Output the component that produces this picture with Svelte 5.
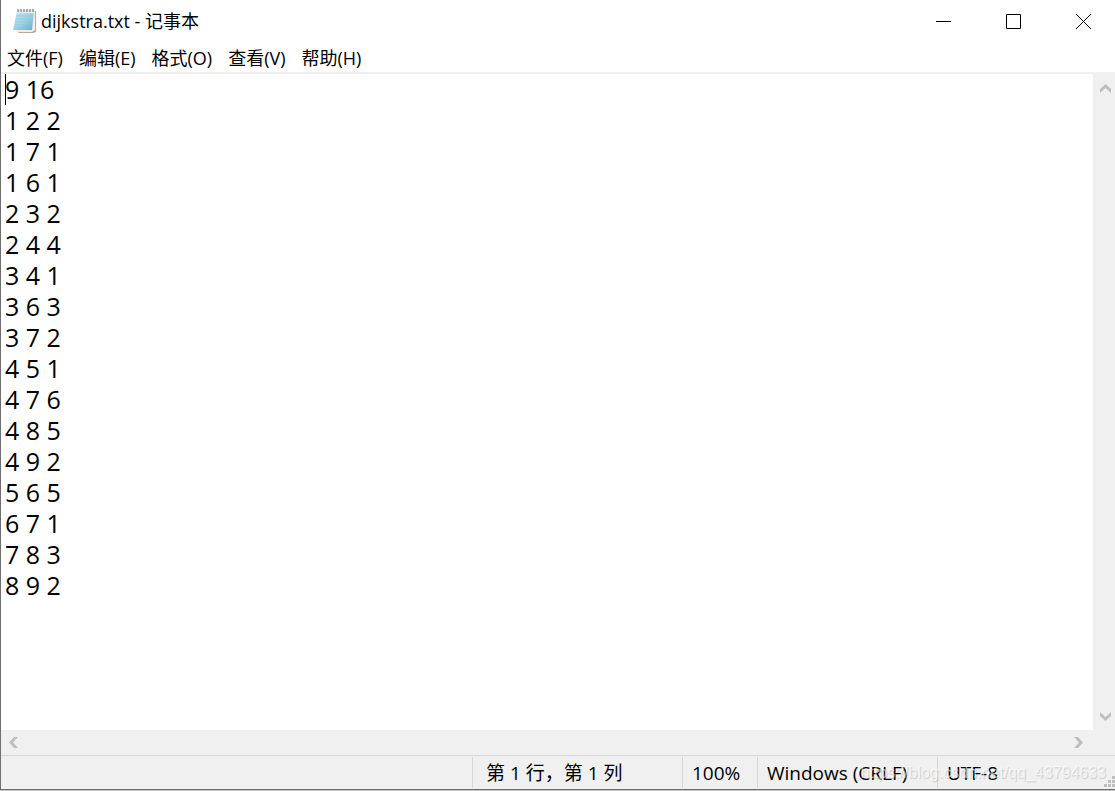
<script lang="ts">
    let text = $state(
        [
            "9 16",
            "1 2 2",
            "1 7 1",
            "1 6 1",
            "2 3 2",
            "2 4 4",
            "3 4 1",
            "3 6 3",
            "3 7 2",
            "4 5 1",
            "4 7 6",
            "4 8 5",
            "4 9 2",
            "5 6 5",
            "6 7 1",
            "7 8 3",
            "8 9 2",
        ].join("\n")
    );

    const menus = ["文件(F)", "编辑(E)", "格式(O)", "查看(V)", "帮助(H)"];
    const rings = [6, 9, 12, 15, 18, 21];
    const grip = [[8, 0], [4, 4], [8, 4], [0, 8], [4, 8], [8, 8]];
</script>

<div class="window">
    <header class="titlebar">
        <svg class="app-icon" width="26" height="26" viewBox="0 0 26 26" aria-hidden="true">
            <defs>
                <linearGradient id="page" x1="0" y1="0" x2="1" y2="1">
                    <stop offset="0" stop-color="#c5e8f1" />
                    <stop offset="0.55" stop-color="#9dd3e2" />
                    <stop offset="1" stop-color="#5fadc3" />
                </linearGradient>
            </defs>
            <path d="M6 3H24V24L21 25H7L5 23Z" fill="#b7a98c" />
            <path d="M6 2H23V22L20 24H5L3 22Z" fill="#f3efe4" />
            <path d="M5 3H22L20 22H1Z" fill="url(#page)" />
            <path d="M4 8H21M4 11H21M3 14H20M3 17H20M2 20H20" stroke="#81c0d2" stroke-width="0.5" />
            <path d="M5 3H22V5H5Z" fill="#e4f1f4" />
            {#each rings as x}
                <path d="M{x} 1V4" stroke="#667b83" stroke-width="1.2" />
            {/each}
        </svg>
        <h1>dijkstra.txt - 记事本</h1>
        <div class="controls">
            <button aria-label="最小化">
                <svg width="15" height="15" viewBox="0 0 15 15"><path d="M0 7.5H15" /></svg>
            </button>
            <button aria-label="最大化">
                <svg width="15" height="15" viewBox="0 0 15 15"><path d="M.5 .5H14.5V14.5H.5Z" /></svg>
            </button>
            <button aria-label="关闭">
                <svg width="15" height="15" viewBox="0 0 15 15"><path d="M0 0L15 15M15 0L0 15" /></svg>
            </button>
        </div>
    </header>

    <nav class="menubar">
        {#each menus as menu}
            <button>{menu}</button>
        {/each}
    </nav>

    <main class="editor">
        <div class="page">
            <textarea aria-label="文本编辑器" spellcheck="false" wrap="off" bind:value={text}></textarea>
            <span class="caret"></span>
        </div>
        <div class="scroll vertical">
            <button aria-label="向上滚动">
                <svg width="11" height="9" viewBox="0 0 11 9"><path d="M0 5L5.5 0L11 5V9L5.5 4L0 9Z" /></svg>
            </button>
            <button aria-label="向下滚动">
                <svg width="11" height="9" viewBox="0 0 11 9"><path d="M0 0L5.5 5L11 0V4L5.5 9L0 4Z" /></svg>
            </button>
        </div>
        <div class="scroll horizontal">
            <button aria-label="向左滚动">
                <svg width="9" height="11" viewBox="0 0 9 11"><path d="M5 0L0 5.5L5 11H9L4 5.5L9 0Z" /></svg>
            </button>
            <button aria-label="向右滚动">
                <svg width="9" height="11" viewBox="0 0 9 11"><path d="M0 0L5 5.5L0 11H4L9 5.5L4 0Z" /></svg>
            </button>
        </div>
    </main>

    <footer class="statusbar">
        <span class="message"></span>
        <span class="position">第 1 行，第 1 列</span>
        <span class="zoom">100%</span>
        <span class="eol">Windows (CRLF)</span>
        <span class="encoding">UTF-8</span>
        <span class="watermark">https://blog.csdn.net/qq_43794633</span>
        <svg class="grip" width="11" height="11" viewBox="0 0 11 11" aria-hidden="true">
            {#each grip as [x, y]}
                <rect {x} {y} width="3" height="3" />
            {/each}
        </svg>
    </footer>
</div>

<style>
    :global(body) {
        margin: 0;
        background: #c4c4c4;
    }

    .window {
        display: flex;
        flex-direction: column;
        box-sizing: border-box;
        height: calc(100vh - 1px);
        border-left: 1px solid #6e6e6e;
        border-bottom: 1px solid #6e6e6e;
        background: #fff;
        color: #000;
        font-family: "Open Sans", "Noto Sans CJK SC", sans-serif;
        font-size: 18px;
    }

    button {
        display: flex;
        align-items: center;
        justify-content: center;
        padding: 0;
        border: none;
        background: none;
        color: inherit;
        font: inherit;
    }

    .titlebar {
        display: flex;
        align-items: center;
        height: 42px;
        padding-left: 11px;
    }

    .app-icon {
        margin-right: 3px;
    }

    h1 {
        flex: 1;
        margin: 0;
        font-size: 18px;
        font-weight: 400;
        line-height: 24px;
    }

    .controls {
        display: flex;
        align-self: stretch;
    }

    .controls button {
        width: 70px;
        padding-left: 6px;
    }

    .controls path {
        fill: none;
        stroke: #000;
    }

    .menubar {
        display: flex;
        gap: 16px;
        height: 30px;
        padding-left: 6px;
        border-bottom: 2px solid #f0f0f0;
    }

    .editor {
        display: grid;
        grid-template: 1fr 25px / 1fr 22px;
        flex: 1;
        min-height: 0;
        background: #f0f0f0;
    }

    .page {
        position: relative;
        background: #fff;
    }

    textarea {
        display: block;
        box-sizing: border-box;
        width: 100%;
        height: 100%;
        padding: 0 4px;
        border: none;
        outline: none;
        resize: none;
        overflow: hidden;
        background: none;
        color: #000;
        font-family: "Open Sans", "Noto Sans CJK SC", sans-serif;
        font-size: 25px;
        line-height: 31px;
    }

    .caret {
        position: absolute;
        top: 0;
        left: 4px;
        width: 1px;
        height: 31px;
        background: #000;
    }

    .scroll {
        display: flex;
        justify-content: space-between;
    }

    .scroll path {
        fill: #bfbfbf;
    }

    .vertical {
        flex-direction: column;
        padding: 10px 0 9px 2px;
    }

    .horizontal {
        padding: 0 10px 0 8px;
    }

    .statusbar {
        position: relative;
        display: flex;
        height: 33px;
        border-top: 1px solid #d7d7d7;
        background: #f0f0f0;
        font-size: 19px;
        line-height: 32px;
    }

    .statusbar > span {
        box-sizing: border-box;
        white-space: nowrap;
    }

    .message {
        flex: 1;
    }

    .position,
    .zoom,
    .eol,
    .encoding {
        border-left: 1px solid #d7d7d7;
        margin: 1px 0;
    }

    .position {
        width: 210px;
        padding-left: 13px;
    }

    .zoom {
        width: 75px;
        padding-left: 9px;
    }

    .eol {
        width: 180px;
        padding-left: 9px;
    }

    .encoding {
        width: 178px;
        padding-left: 9px;
    }

    .watermark {
        position: absolute;
        right: 9px;
        bottom: 0;
        color: rgba(255, 255, 255, 0.6);
        font-family: "Liberation Sans", sans-serif;
        font-size: 16px;
        text-shadow: 1px 1px 1px rgba(0, 0, 0, 0.15);
        pointer-events: none;
    }

    .grip {
        position: absolute;
        right: 0;
        bottom: 2px;
        fill: #bfbfbf;
    }
</style>
